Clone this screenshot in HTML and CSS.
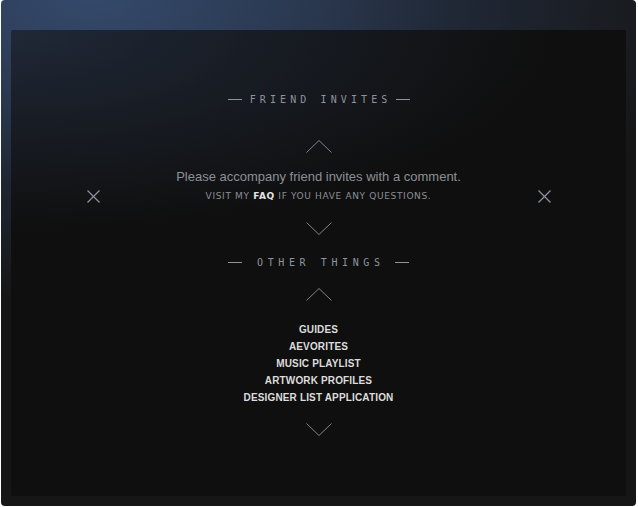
FILE: index.html
```html
<!DOCTYPE html>
<html lang="en">
<head>
    <meta charset="UTF-8">
    <meta name="viewport" content="width=device-width, initial-scale=1.0">
    <title>Friend Invites</title>
    <link rel="stylesheet" href="styles.css">
</head>
<body>
    <!-- Cornice esterna con il bagliore blu -->
    <div class="frame">
        <div class="panel">

            <!-- Sezione inviti -->
            <div class="heading"><span>FRIEND INVITES</span></div>

            <svg class="chevron" width="26" height="13" viewBox="0 0 26 13">
                <polyline points="0.5,12.5 13,0.5 25.5,12.5" />
            </svg>

            <div class="invite-row">
                <button class="close" aria-label="Decline">
                    <svg width="13" height="13" viewBox="0 0 13 13">
                        <line x1="0.5" y1="0.5" x2="12.5" y2="12.5" />
                        <line x1="12.5" y1="0.5" x2="0.5" y2="12.5" />
                    </svg>
                </button>
                <div class="invite-text">
                    <p class="comment">Please accompany friend invites with a comment.</p>
                    <p class="faq">VISIT MY <a href="#">FAQ</a> IF YOU HAVE ANY QUESTIONS.</p>
                </div>
                <button class="close" aria-label="Accept">
                    <svg width="13" height="13" viewBox="0 0 13 13">
                        <line x1="0.5" y1="0.5" x2="12.5" y2="12.5" />
                        <line x1="12.5" y1="0.5" x2="0.5" y2="12.5" />
                    </svg>
                </button>
            </div>

            <svg class="chevron down" width="26" height="13" viewBox="0 0 26 13">
                <polyline points="0.5,0.5 13,12.5 25.5,0.5" />
            </svg>

            <!-- Altri link -->
            <div class="heading wide"><span>OTHER THINGS</span></div>

            <svg class="chevron up2" width="26" height="13" viewBox="0 0 26 13">
                <polyline points="0.5,12.5 13,0.5 25.5,12.5" />
            </svg>

            <ul class="links">
                <li><a href="#">GUIDES</a></li>
                <li><a href="#">AEVORITES</a></li>
                <li><a href="#">MUSIC PLAYLIST</a></li>
                <li><a href="#">ARTWORK PROFILES</a></li>
                <li><a href="#">DESIGNER LIST APPLICATION</a></li>
            </ul>

            <svg class="chevron last" width="26" height="13" viewBox="0 0 26 13">
                <polyline points="0.5,0.5 13,12.5 25.5,0.5" />
            </svg>
        </div>
    </div>
</body>
</html>
```

FILE: styles.css
```css
/* Pagina */
body {
    margin: 0;
    background: #fff;
    font-family: "Liberation Sans", Arial, sans-serif;
}

/* Cornice esterna */
.frame {
    margin-left: 1px;
    width: 635px;
    height: 506px;
    box-sizing: border-box;
    padding: 30px 10px 10px 10px;
    border-radius: 4px;
    background-color: #161616;
    background-image: radial-gradient(ellipse 620px 300px at 90px 0, #34496b 0%, #2c3b54 30%, #1f2633 62%, #161616 100%);
}

/* Pannello interno */
.panel {
    height: 466px;
    box-sizing: border-box;
    padding-top: 62px;
    border-radius: 2px;
    background-color: #0f0f0f;
    background-image: radial-gradient(ellipse 540px 200px at 0 0, #202837 0%, #191e27 40%, #0f0f0f 100%);
    display: flex;
    flex-direction: column;
    align-items: center;
}

/* Titoli con trattini */
.heading {
    width: 182px;
    height: 14px;
    display: flex;
    align-items: center;
    justify-content: space-between;
    font-family: "DejaVu Sans Mono", monospace;
    font-size: 10px;
    letter-spacing: 4.1px;
    color: #8e949c;
}

.heading::before,
.heading::after {
    content: "";
    width: 14px;
    height: 1px;
    background: #8e949c;
}

.heading span {
    margin-right: -4.1px;
}

.heading.wide {
    margin-top: 20px;
    letter-spacing: 4.6px;
}

.heading.wide span {
    margin-right: -4.6px;
}

/* Frecce */
.chevron {
    display: block;
    margin-top: 34px;
}

.chevron polyline {
    fill: none;
    stroke: #80858c;
    stroke-width: 1;
}

.chevron.down {
    margin-top: 19px;
}

.chevron.up2 {
    margin-top: 19px;
}

.chevron.last {
    margin-top: 17px;
}

/* Riga dell'invito */
.invite-row {
    margin-top: 16px;
    display: flex;
    align-items: flex-end;
    gap: 19px;
}

.close {
    width: 13px;
    height: 13px;
    padding: 0;
    border: none;
    background: none;
    display: block;
    cursor: pointer;
}

.close svg {
    display: block;
}

.close line {
    stroke: #8a929e;
    stroke-width: 1.3;
}

.invite-text {
    width: 400px;
    text-align: center;
}

.comment {
    margin: 0;
    font-size: 13px;
    line-height: 16px;
    color: #8c9097;
}

.faq {
    margin: 5px 0 0 0;
    font-family: "DejaVu Sans", Verdana, sans-serif;
    font-size: 9px;
    line-height: 13px;
    letter-spacing: 0.65px;
    color: #8a8f96;
}

.faq a {
    color: #e4e4e4;
    font-weight: bold;
    text-decoration: none;
}

/* Elenco dei link */
.links {
    list-style: none;
    margin: 20px 0 0 0;
    padding: 0;
    text-align: center;
}

.links li {
    font-size: 10px;
    line-height: 17px;
    font-weight: bold;
    letter-spacing: 0.15px;
}

.links a {
    color: #dcdcdc;
    text-decoration: none;
}
```
